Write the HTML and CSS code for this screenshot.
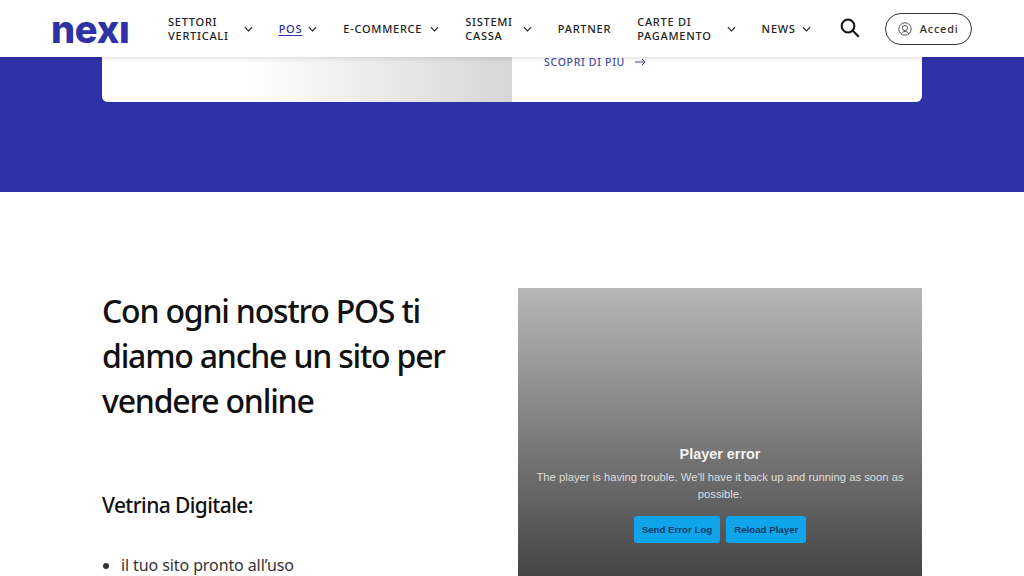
FILE: index.html
```html
<!DOCTYPE html>
<html lang="it">
<head>
    <meta charset="UTF-8">
    <meta name="viewport" content="width=device-width, initial-scale=1.0">
    <title>Nexi POS</title>
    <link rel="stylesheet" href="styles.css">
</head>
<body>
    <!-- Header -->
    <header class="site-header">
        <a class="logo" href="#">nexı</a>
        <nav class="main-nav">
            <a class="nav-item nav-two" href="#">
                <span class="nav-label">Settori<br>Verticali</span>
                <svg class="chevron" viewBox="0 0 10 6"><path d="M1 1l4 4 4-4"/></svg>
            </a>
            <a class="nav-item nav-active" href="#">
                <span class="nav-label">POS</span>
                <svg class="chevron" viewBox="0 0 10 6"><path d="M1 1l4 4 4-4"/></svg>
            </a>
            <a class="nav-item nav-wide" href="#">
                <span class="nav-label">E-commerce</span>
                <svg class="chevron" viewBox="0 0 10 6"><path d="M1 1l4 4 4-4"/></svg>
            </a>
            <a class="nav-item nav-two nav-short" href="#">
                <span class="nav-label">Sistemi<br>Cassa</span>
                <svg class="chevron" viewBox="0 0 10 6"><path d="M1 1l4 4 4-4"/></svg>
            </a>
            <a class="nav-item" href="#">
                <span class="nav-label">Partner</span>
            </a>
            <a class="nav-item nav-two" href="#">
                <span class="nav-label">Carte di<br>Pagamento</span>
                <svg class="chevron" viewBox="0 0 10 6"><path d="M1 1l4 4 4-4"/></svg>
            </a>
            <a class="nav-item" href="#">
                <span class="nav-label">News</span>
                <svg class="chevron" viewBox="0 0 10 6"><path d="M1 1l4 4 4-4"/></svg>
            </a>
        </nav>
        <svg class="search-icon" viewBox="0 0 20 20"><circle cx="8" cy="8" r="6.4"/><path d="M12.8 12.8l6 6"/></svg>
        <a class="login-btn" href="#">
            <svg class="user-icon" viewBox="0 0 14 14"><circle cx="7" cy="7" r="6.2"/><circle cx="7" cy="6" r="2.6"/><path d="M3.4 11.6c1-1.6 2.2-2.2 3.6-2.2s2.6.6 3.6 2.2"/></svg>
            Accedi
        </a>
    </header>

    <!-- Blue band -->
    <section class="blue-band">
        <div class="promo-card">
            <div class="promo-image"></div>
            <div class="promo-text">
                <a class="more-link" href="#">Scopri di piu
                    <svg class="arrow" viewBox="0 0 11 8"><path d="M0 4h10M7 1l3 3-3 3"/></svg>
                </a>
            </div>
        </div>
    </section>

    <!-- Vetrina -->
    <section class="content">
        <div class="content-text">
            <h2>Con ogni nostro POS ti diamo anche un sito per vendere online</h2>
            <h3>Vetrina Digitale:</h3>
            <ul>
                <li>il tuo sito pronto all’uso</li>
            </ul>
        </div>
        <div class="player">
            <h4>Player error</h4>
            <p>The player is having trouble. We'll have it back up and running as soon as possible.</p>
            <div class="player-buttons">
                <button>Send Error Log</button>
                <button>Reload Player</button>
            </div>
        </div>
    </section>
</body>
</html>
```

FILE: styles.css
```css
body {
    font-family: 'Noto Sans', sans-serif;
    background-color: #fff;
    color: #111;
    margin: 0;
    height: 576px;
    overflow: hidden;
}

a {
    text-decoration: none;
    color: inherit;
}

/* Header */
.site-header {
    position: relative;
    z-index: 10;
    display: flex;
    align-items: center;
    height: 57px;
    padding-left: 51px;
    background: #fff;
    box-shadow: 0 1px 5px rgba(0, 0, 0, 0.15);
}

.logo {
    flex: none;
    width: 78px;
    margin-right: 39px;
    font-family: 'Inter', sans-serif;
    font-size: 38px;
    font-weight: 800;
    line-height: 32px;
    letter-spacing: -0.3px;
    color: #2d32a5;
}

.main-nav {
    display: flex;
    align-items: center;
}

.nav-item {
    display: flex;
    align-items: center;
    margin-right: 26px;
    font-size: 11px;
    font-weight: 500;
    line-height: 14px;
    letter-spacing: 0.75px;
    text-transform: uppercase;
    color: #222;
}

.nav-label {
    display: block;
    white-space: nowrap;
}

.nav-active .nav-label {
    color: #2d32a5;
    text-decoration: underline;
    text-underline-offset: 2px;
}

.chevron {
    width: 9px;
    height: 6px;
    margin-left: 6px;
    fill: none;
    stroke: #222;
    stroke-width: 1.3;
}

.nav-two .chevron {
    margin-left: 15px;
}

.nav-wide .chevron {
    margin-left: 8px;
}

.nav-short .chevron {
    margin-left: 10px;
}

.search-icon {
    flex: none;
    width: 20px;
    height: 20px;
    margin: 0 0 2px 3px;
    fill: none;
    stroke: #111;
    stroke-width: 2;
}

.login-btn {
    flex: none;
    display: flex;
    align-items: center;
    justify-content: center;
    gap: 8px;
    width: 85px;
    height: 30px;
    margin-left: 25px;
    border: 1px solid #333;
    border-radius: 16px;
    font-size: 11px;
    font-weight: 500;
    letter-spacing: 0.8px;
    color: #333;
}

.user-icon {
    width: 14px;
    height: 14px;
    fill: none;
    stroke: #444;
    stroke-width: 0.9;
}

/* Blue band */
.blue-band {
    height: 135px;
    padding: 0 102px;
    background: #2d32a8;
}

.promo-card {
    display: flex;
    height: 45px;
    border-radius: 0 0 6px 6px;
    background: #fff;
}

.promo-image {
    width: 410px;
    border-radius: 0 0 0 6px;
    background: linear-gradient(90deg, #fff 35%, #d6d6d6 100%);
}

.promo-text {
    padding: 0 32px;
}

.more-link {
    display: flex;
    align-items: center;
    gap: 10px;
    font-size: 10.5px;
    font-weight: 500;
    line-height: 10px;
    letter-spacing: 0.7px;
    text-transform: uppercase;
    color: #4a4ea8;
}

.arrow {
    width: 11px;
    height: 8px;
    fill: none;
    stroke: #3a3ea5;
    stroke-width: 1;
}

/* Content */
.content {
    display: flex;
    justify-content: space-between;
    padding: 96px 102px 0;
}

.content-text {
    width: 360px;
}

h2 {
    margin: 0;
    font-size: 32px;
    font-weight: 500;
    line-height: 45px;
    letter-spacing: -1.2px;
    color: #111;
}

h3 {
    margin: 67px 0 0;
    font-size: 21px;
    font-weight: 500;
    line-height: 30px;
    letter-spacing: -0.6px;
    color: #111;
}

ul {
    margin: 33px 0 0;
    padding-left: 19px;
}

li {
    font-size: 16px;
    line-height: 24px;
    letter-spacing: -0.1px;
    color: #333;
}

.player {
    flex: none;
    display: flex;
    flex-direction: column;
    align-items: center;
    box-sizing: border-box;
    width: 404px;
    height: 300px;
    padding: 156px 16px 0;
    font-family: 'Liberation Sans', Arial, sans-serif;
    text-align: center;
    color: #ddd;
    background: linear-gradient(180deg, #b7b7b7 0%, #404040 100%);
}

.player h4 {
    margin: 0;
    font-size: 14.4px;
    font-weight: 700;
    line-height: 20px;
    color: #f2f2f2;
}

.player p {
    margin: 5px 0 0;
    font-size: 11.25px;
    line-height: 17px;
}

.player-buttons {
    display: flex;
    gap: 6px;
    margin-top: 13px;
}

.player-buttons button {
    height: 27px;
    padding: 0 8px;
    border: none;
    border-radius: 3px;
    font-family: inherit;
    font-size: 9.7px;
    font-weight: 700;
    color: #0b3a63;
    background: #0ea5ea;
}
```
